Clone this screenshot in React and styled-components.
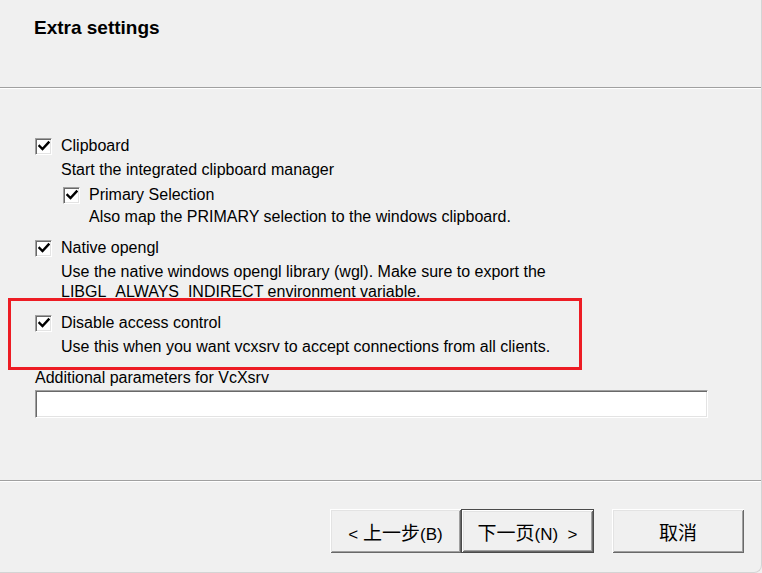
import React from 'react'
import styled, { createGlobalStyle } from 'styled-components'

const GlobalStyle = createGlobalStyle`
  html, body {
    margin: 0;
    padding: 0;
    background: #f0f0f0;
  }
  body {
    font-family: "Liberation Sans", "Noto Sans CJK SC", sans-serif;
    color: #000;
  }
`

const Window = styled.div`
  display: flex;
  flex-direction: column;
  width: 761px;
  height: 572px;
  background: #f0f0f0;
  border-right: 1px solid #d4d4d4;
  border-bottom: 1px solid #d4d4d4;
  border-bottom-right-radius: 8px;
  box-sizing: content-box;
  overflow: hidden;
`

const Header = styled.div`
  height: 87px;
  box-sizing: border-box;
  padding: 16px 0 0 34px;
`

const Title = styled.h1`
  margin: 0;
  font-size: 19px;
  line-height: 23px;
  font-weight: 700;
`

const Divider = styled.div`
  height: 1px;
  background: #a0a0a0;
  border-bottom: 1px solid #ffffff;
`

const Body = styled.div`
  flex: 1;
  display: flex;
  flex-direction: column;
  padding: 47px 0 0 35px;
  font-size: 16px;
  line-height: 20px;
`

const Option = styled.div`
  position: relative;
  display: flex;
  flex-direction: column;
  margin-top: ${p => p.$gap || 0}px;
  padding-left: ${p => (p.$nested ? 28 : 0)}px;

  ${p => p.$highlight && `
    &::before {
      content: '';
      position: absolute;
      left: -27px;
      top: -15px;
      width: 574px;
      height: 72px;
      box-sizing: border-box;
      border: 3px solid #ed1c24;
      pointer-events: none;
    }
  `}
`

const CheckRow = styled.label`
  display: flex;
  align-items: center;
  gap: 9px;
  height: 20px;
`

const Box = styled.span`
  width: 17px;
  height: 17px;
  box-sizing: border-box;
  display: flex;
  align-items: center;
  justify-content: center;
  background: #fff;
  border-top: 1px solid #a0a0a0;
  border-left: 1px solid #a0a0a0;
  border-right: 1px solid #ffffff;
  border-bottom: 1px solid #ffffff;
  box-shadow: inset 1px 1px 0 #696969, inset -1px -1px 0 #e3e3e3;
  flex-shrink: 0;
`

const Desc = styled.div`
  margin-top: ${p => p.$gap}px;
  padding-left: 26px;
`

const FieldLabel = styled.div`
  margin-top: 11px;
`

const Input = styled.input`
  margin-top: 2px;
  width: 673px;
  height: 28px;
  box-sizing: border-box;
  background: #fff;
  border-style: solid;
  border-width: 1px;
  border-color: #a0a0a0 #ffffff #ffffff #a0a0a0;
  box-shadow: inset 1px 1px 0 #696969, inset -1px -1px 0 #e3e3e3;
  font: inherit;
  outline: none;
  padding: 0 4px;
`

const Footer = styled.div`
  height: 90px;
  box-sizing: border-box;
  display: flex;
  justify-content: flex-end;
  align-items: flex-start;
  padding: 27px 17px 0 0;
`

const Button = styled.button`
  width: ${p => p.$w}px;
  height: 44px;
  margin-left: ${p => p.$ml || 0}px;
  box-sizing: border-box;
  background: #f0f0f0;
  border: ${p => (p.$default ? '1px solid #4a4a4a' : 'none')};
  box-shadow:
    inset 1px 1px 0 #ffffff,
    inset -1px -1px 0 #696969,
    inset 2px 2px 0 #e3e3e3,
    inset -2px -2px 0 #a0a0a0;
  font-family: "Liberation Sans", "Noto Sans CJK SC", sans-serif;
  font-size: 17px;
  color: #000;
  padding: 0;
  white-space: pre;
`

const Han = styled.span`
  font-size: 19px;
`

const Check = () => (
  <svg width="12" height="12" viewBox="0 0 12 12">
    <path d="M1.5 6 L4.5 9 L10.5 2.5" fill="none" stroke="#000" strokeWidth="2.4" strokeLinecap="square" />
  </svg>
)

const CheckItem = ({ label }) => (
  <CheckRow>
    <Box><Check /></Box>
    <span>{label}</span>
  </CheckRow>
)

export default function App() {
  return (
    <>
      <GlobalStyle />
      <Window>
        <Header>
          <Title>Extra settings</Title>
        </Header>
        <Divider />
        <Body>
          <Option>
            <CheckItem label="Clipboard" />
            <Desc $gap={4}>Start the integrated clipboard manager</Desc>
            <Option $nested $gap={5}>
              <CheckItem label="Primary Selection" />
              <Desc $gap={2}>Also map the PRIMARY selection to the windows clipboard.</Desc>
            </Option>
          </Option>
          <Option $gap={11}>
            <CheckItem label="Native opengl" />
            <Desc $gap={4}>
              Use the native windows opengl library (wgl). Make sure to export the
              <br />
              LIBGL_ALWAYS_INDIRECT environment variable.
            </Desc>
          </Option>
          <Option $gap={11} $highlight>
            <CheckItem label="Disable access control" />
            <Desc $gap={4}>Use this when you want vcxsrv to accept connections from all clients.</Desc>
          </Option>
          <FieldLabel>Additional parameters for VcXsrv</FieldLabel>
          <Input type="text" />
        </Body>
        <Divider />
        <Footer>
          <Button $w={131}>{'< '}<Han>上一步</Han>(B)</Button>
          <Button $w={133} $default><Han>下一页</Han>{'(N)  >'}</Button>
          <Button $w={132} $ml={18}><Han>取消</Han></Button>
        </Footer>
      </Window>
    </>
  )
}
